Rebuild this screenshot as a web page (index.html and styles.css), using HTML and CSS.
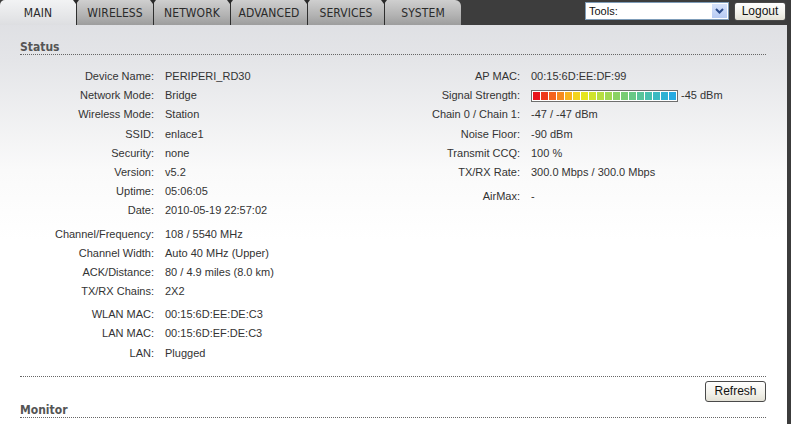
FILE: index.html
```html
<!DOCTYPE html>
<html>
<head>
<meta charset="utf-8">
<link rel="stylesheet" href="styles.css">
</head>
<body>
<div class="page">
  <div class="topbar">
    <div class="tabs">
      <div class="tab active">MAIN</div>
      <div class="tab">WIRELESS</div>
      <div class="tab">NETWORK</div>
      <div class="tab">ADVANCED</div>
      <div class="tab">SERVICES</div>
      <div class="tab last">SYSTEM</div>
    </div>
    <div class="tools">
      <div class="select">
        <span class="select-text">Tools:</span>
        <span class="select-btn">
          <svg width="9" height="6" viewBox="0 0 9 6"><path d="M1 1 L4.5 4.5 L8 1" fill="none" stroke="#2b4c8c" stroke-width="2"/></svg>
        </span>
      </div>
      <div class="btn logout">Logout</div>
    </div>
  </div>
  <div class="content">
    <h2 class="section">Status</h2>
    <div class="cols">
      <div class="col">
        <div class="group">
          <div class="row"><span class="lbl">Device Name:</span><span class="val">PERIPERI_RD30</span></div>
          <div class="row"><span class="lbl">Network Mode:</span><span class="val">Bridge</span></div>
          <div class="row"><span class="lbl">Wireless Mode:</span><span class="val">Station</span></div>
          <div class="row"><span class="lbl">SSID:</span><span class="val">enlace1</span></div>
          <div class="row"><span class="lbl">Security:</span><span class="val">none</span></div>
          <div class="row"><span class="lbl">Version:</span><span class="val">v5.2</span></div>
          <div class="row"><span class="lbl">Uptime:</span><span class="val">05:06:05</span></div>
          <div class="row"><span class="lbl">Date:</span><span class="val">2010-05-19 22:57:02</span></div>
        </div>
        <div class="group">
          <div class="row"><span class="lbl">Channel/Frequency:</span><span class="val">108 / 5540 MHz</span></div>
          <div class="row"><span class="lbl">Channel Width:</span><span class="val">Auto 40 MHz (Upper)</span></div>
          <div class="row"><span class="lbl">ACK/Distance:</span><span class="val">80 / 4.9 miles (8.0 km)</span></div>
          <div class="row"><span class="lbl">TX/RX Chains:</span><span class="val">2X2</span></div>
        </div>
        <div class="group">
          <div class="row"><span class="lbl">WLAN MAC:</span><span class="val">00:15:6D:EE:DE:C3</span></div>
          <div class="row"><span class="lbl">LAN MAC:</span><span class="val">00:15:6D:EF:DE:C3</span></div>
          <div class="row"><span class="lbl">LAN:</span><span class="val">Plugged</span></div>
        </div>
      </div>
      <div class="col">
        <div class="group">
          <div class="row"><span class="lbl">AP MAC:</span><span class="val">00:15:6D:EE:DF:99</span></div>
          <div class="row"><span class="lbl">Signal Strength:</span><span class="val signal">
            <span class="bar">
              <i style="background:#e8141c"></i><i style="background:#ee3a1c"></i><i style="background:#f4641c"></i><i style="background:#f78a1c"></i><i style="background:#f9b31c"></i><i style="background:#f4d41c"></i><i style="background:#e6e61e"></i><i style="background:#cfe42c"></i><i style="background:#b6de40"></i><i style="background:#a0d852"></i><i style="background:#8ad264"></i><i style="background:#78cc74"></i><i style="background:#68c886"></i><i style="background:#58c49a"></i><i style="background:#48c0ae"></i><i style="background:#3abac2"></i><i style="background:#2eb2d4"></i><i style="background:#26aae2"></i>
            </span>-45 dBm</span></div>
          <div class="row"><span class="lbl">Chain 0 / Chain 1:</span><span class="val">-47 / -47 dBm</span></div>
          <div class="row"><span class="lbl">Noise Floor:</span><span class="val">-90 dBm</span></div>
          <div class="row"><span class="lbl">Transmit CCQ:</span><span class="val">100 %</span></div>
          <div class="row"><span class="lbl">TX/RX Rate:</span><span class="val">300.0 Mbps / 300.0 Mbps</span></div>
        </div>
        <div class="group airmax">
          <div class="row"><span class="lbl">AirMax:</span><span class="val">-</span></div>
        </div>
      </div>
    </div>
    <div class="divider"></div>
    <div class="actions"><div class="btn refresh">Refresh</div></div>
    <h2 class="section monitor">Monitor</h2>
  </div>
</div>
</body>
</html>
```
FILE: styles.css
```css
html, body {
  margin: 0;
  padding: 0;
  height: 100%;
}
body {
  font-family: "Liberation Sans", Arial, sans-serif;
  font-size: 11px;
  color: #333;
  overflow: hidden;
}
.page {
  height: 424px;
  background: linear-gradient(#dcdde1 0, #e4e5e8 60px, #fafafa 170px, #ffffff 240px);
  border-right: 4px solid #3c3c3c;
  box-sizing: border-box;
  width: 791px;
}
.topbar {
  height: 25px;
  background: #3d3d3d;
  display: flex;
  justify-content: space-between;
  align-items: flex-start;
}
.tabs {
  display: flex;
  height: 25px;
}
.tab {
  position: relative;
  width: 77px;
  height: 25px;
  box-sizing: border-box;
  border-left: 1px solid #2e2e2e;
  background: linear-gradient(#cfcfcf, #b3b3b3 60%, #9d9d9d);
  font-family: "DejaVu Sans Condensed", "Liberation Sans Narrow", sans-serif;
  font-size: 12px;
  color: #2a2a2a;
  text-align: center;
  line-height: 26px;
  letter-spacing: 0.1px;
}
.tab.active {
  width: 76px;
  border-left: none;
  background: linear-gradient(#f2f3f4, #e4e5e7 70%, #dddee1);
  border-top-left-radius: 5px;
}
.tab:not(.active)::before {
  content: "";
  position: absolute;
  left: -4px;
  top: 0;
  border-left: 3px solid transparent;
  border-right: 3px solid transparent;
  border-top: 4px solid #2a2a2a;
}
.tab.last {
  border-top-right-radius: 6px;
}
.tools {
  display: flex;
  gap: 5px;
  padding: 2px 1px 0 0;
}
.select {
  width: 144px;
  height: 18px;
  box-sizing: border-box;
  background: #fff;
  border: 1px solid #7f9db9;
  display: flex;
  align-items: center;
  justify-content: space-between;
}
.select-text {
  padding-left: 3px;
  color: #111;
}
.select-btn {
  width: 15px;
  height: 14px;
  margin-right: 1px;
  background: linear-gradient(#d6e2fb, #b7cbf3);
  display: flex;
  align-items: center;
  justify-content: center;
}
.btn {
  box-sizing: border-box;
  border: 1px solid #4a4a4a;
  border-radius: 3px;
  background: linear-gradient(#ffffff, #f2f1ea 60%, #e3e1d6);
  color: #111;
  text-align: center;
  font-size: 12px;
}
.logout {
  width: 52px;
  height: 19px;
  line-height: 17px;
}
.content {
  padding: 0 20px 0 20px;
  width: 746px;
}
.section {
  margin: 0;
  padding-top: 16px;
  font-family: "DejaVu Sans Condensed", sans-serif;
  font-size: 12px;
  font-weight: bold;
  color: #555;
  line-height: 13px;
  border-bottom: 1px dotted #666;
  padding-bottom: 0;
}
.cols {
  display: flex;
  padding-top: 12px;
}
.col {
  width: 366px;
}
.group + .group {
  margin-top: 4px;
}
.group.airmax {
  margin-top: 5px;
}
.row {
  display: grid;
  grid-template-columns: 134px 1fr;
  column-gap: 11px;
  height: 19.2px;
  line-height: 19px;
  white-space: nowrap;
}
.lbl {
  text-align: right;
}
.signal {
  display: flex;
  align-items: center;
  gap: 3px;
}
.bar {
  display: flex;
  gap: 1px;
  padding: 1px;
  border: 1px solid #6e6e6e;
  background: #fff;
  box-sizing: border-box;
  height: 12px;
  width: 147px;
}
.bar i {
  display: block;
  width: 7px;
  height: 8px;
}
.divider {
  margin-top: 13px;
  border-bottom: 1px dotted #666;
}
.actions {
  display: flex;
  justify-content: flex-end;
  padding-top: 4px;
}
.refresh {
  width: 61px;
  height: 21px;
  line-height: 19px;
}
.section.monitor {
  padding-top: 2px;
}
```
